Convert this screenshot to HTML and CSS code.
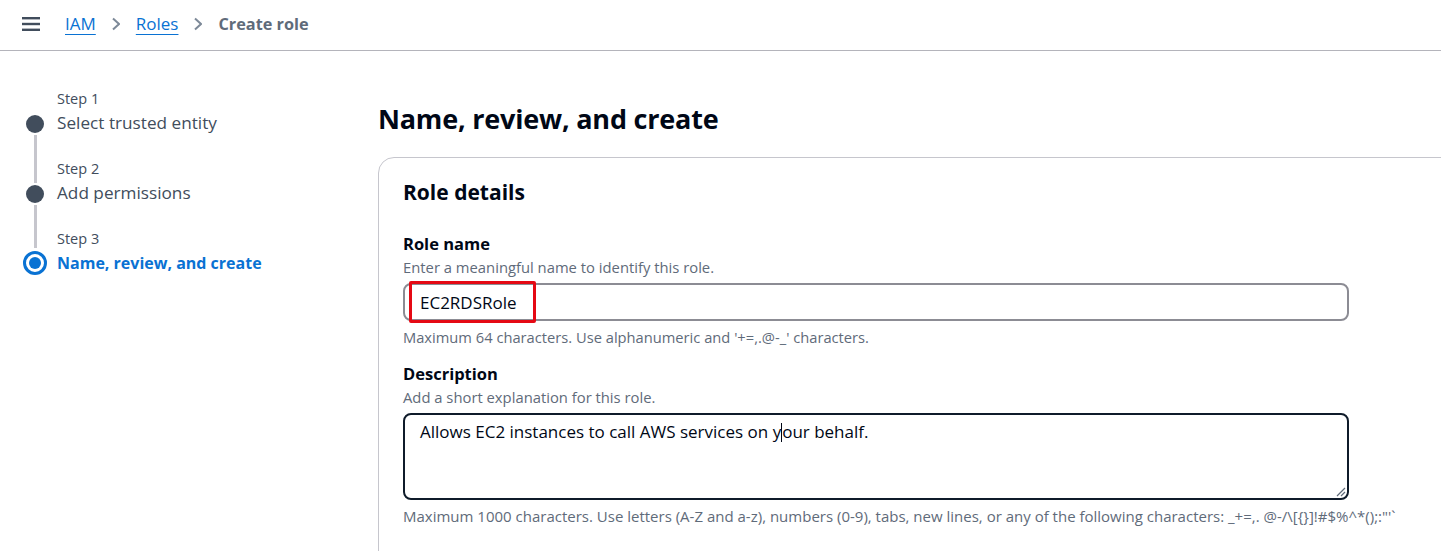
FILE: index.html
```html
<!DOCTYPE html>
<html lang="en">
<head>
<meta charset="utf-8">
<title>Create role</title>
<link rel="stylesheet" href="styles.css">
</head>
<body>
<header class="topbar">
  <svg class="menu" width="18" height="14" viewBox="0 0 18 14"><rect x="0" y="0" width="18" height="2.4" fill="#414d5c"/><rect x="0" y="5.8" width="18" height="2.4" fill="#414d5c"/><rect x="0" y="11.6" width="18" height="2.4" fill="#414d5c"/></svg>
  <nav class="crumbs">
    <a class="crumb-link">IAM</a>
    <svg class="chev" width="8" height="14" viewBox="0 0 8 14"><path d="M1 1.5 L7 7 L1 12.5" fill="none" stroke="#7d8998" stroke-width="2"/></svg>
    <a class="crumb-link">Roles</a>
    <svg class="chev" width="8" height="14" viewBox="0 0 8 14"><path d="M1 1.5 L7 7 L1 12.5" fill="none" stroke="#7d8998" stroke-width="2"/></svg>
    <span class="crumb-current">Create role</span>
  </nav>
</header>
<div class="layout">
  <aside class="steps">
    <div class="step first">
      <div class="rail"><span class="line"></span><span class="dot"></span></div>
      <div class="stext"><div class="slabel">Step 1</div><div class="stitle">Select trusted entity</div></div>
    </div>
    <div class="step">
      <div class="rail"><span class="line"></span><span class="dot"></span></div>
      <div class="stext"><div class="slabel">Step 2</div><div class="stitle">Add permissions</div></div>
    </div>
    <div class="step active">
      <div class="rail"><span class="line"></span><span class="dot"><span class="inner"></span></span></div>
      <div class="stext"><div class="slabel">Step 3</div><div class="stitle">Name, review, and create</div></div>
    </div>
  </aside>
  <main class="main">
    <h1 class="page-title">Name, review, and create</h1>
    <section class="card">
      <h2 class="card-title">Role details</h2>
      <div class="field">
        <div class="label">Role name</div>
        <div class="hint">Enter a meaningful name to identify this role.</div>
        <div class="input-wrap">
          <div class="input">EC2RDSRole</div>
          <span class="highlight"></span>
        </div>
        <div class="constraint">Maximum 64 characters. Use alphanumeric and '+=,.@-_' characters.</div>
      </div>
      <div class="field desc">
        <div class="label">Description</div>
        <div class="hint">Add a short explanation for this role.</div>
        <div class="textarea">Allows EC2 instances to call AWS services on y<span class="caret"></span>our behalf.<svg class="grip" width="10" height="10" viewBox="0 0 10 10"><path d="M1 9 L9 1 M5 9 L9 5" stroke="#5f6b7a" stroke-width="1.2" fill="none"/></svg></div>
        <div class="constraint long">Maximum 1000 characters. Use letters (A-Z and a-z), numbers (0-9), tabs, new lines, or any of the following characters: _+=,. @-/\[{}]!#$%^*();:"'`</div>
      </div>
    </section>
  </main>
</div>
</body>
</html>
```

FILE: styles.css
```css
* { box-sizing: border-box; }
html, body { margin: 0; padding: 0; }
body {
  font-family: "Open Sans", "Noto Sans", sans-serif;
  color: #000716;
  background: #ffffff;
  width: 1441px;
  height: 551px;
  overflow: hidden;
}
.topbar {
  height: 51px;
  border-bottom: 1px solid #b4b4bb;
  display: flex;
  align-items: center;
  padding-left: 22px;
  padding-bottom: 3px;
}
.menu { display: block; margin-right: 25px; }
.crumbs {
  display: flex;
  align-items: center;
  gap: 16px;
  font-size: 17px;
  line-height: 22px;
}
.crumb-link {
  color: #0972d3;
  text-decoration: underline;
  text-underline-offset: 4px;
  text-decoration-thickness: 1px;
}
.chev { display: block; }
.crumb-current { color: #5f6b7a; font-weight: 700; font-size: 16.3px; }

.layout { display: flex; }
.steps {
  width: 378px;
  flex: none;
  padding-left: 22px;
  padding-top: 38px;
}
.step { display: flex; gap: 9px; }
.stext { padding-top: 24px; }
.step.first .stext { padding-top: 0; }
.rail {
  width: 26px;
  display: flex;
  flex-direction: column;
  align-items: center;
}
.line {
  flex: 1;
  width: 3px;
  background: #c6c6cd;
  margin-bottom: 2px;
}
.first .line { background: transparent; }
.dot {
  width: 18px;
  height: 18px;
  border-radius: 50%;
  background: #414d5c;
  margin-bottom: 2px;
}
.active .line { margin-bottom: 3px; }
.active .dot {
  width: 24px;
  height: 24px;
  background: #fff;
  border: 3px solid #0972d3;
  margin-bottom: 0;
  display: flex;
  align-items: center;
  justify-content: center;
}
.inner { width: 12px; height: 12px; border-radius: 50%; background: #0972d3; }
.slabel { font-size: 14.5px; line-height: 20px; color: #414d5c; margin-bottom: 2px; }
.stitle { font-size: 17.2px; line-height: 24px; color: #414d5c; }
.active .stitle { color: #0972d3; font-weight: 700; font-size: 16px; }

.main { flex: none; padding-top: 50px; }
.page-title {
  margin: 0 0 20px;
  font-size: 27px;
  line-height: 36px;
  font-weight: 700;
  letter-spacing: -0.2px;
}
.card {
  width: 1120px;
  border: 1px solid #c6c6cd;
  border-radius: 16px;
  padding: 21px 24px 40px;
}
.card-title { margin: 0 0 28px; font-size: 21px; line-height: 26px; font-weight: 700; }
.label { font-size: 16.5px; line-height: 22px; font-weight: 700; }
.hint { font-size: 14.8px; line-height: 20px; color: #5f6b7a; margin-top: 2px; }
.input-wrap { position: relative; width: 946px; margin-top: 6px; }
.input {
  height: 38px;
  border: 2px solid #8c8c94;
  border-radius: 8px;
  padding: 0 15px;
  display: flex;
  align-items: center;
  font-size: 17px;
  color: #000716;
}
.highlight {
  position: absolute;
  left: 6px;
  top: -2px;
  width: 127px;
  height: 42px;
  border: 3px solid #e50914;
  border-radius: 2px;
}
.constraint { font-size: 14.7px; line-height: 20px; color: #5f6b7a; margin-top: 6px; white-space: nowrap; }
.constraint.long { font-size: 15px; }
.field.desc { margin-top: 16px; }
.textarea {
  position: relative;
  width: 946px;
  height: 87px;
  margin-top: 6px;
  border: 2px solid #0f1b2a;
  border-radius: 8px;
  padding: 5px 15px;
  font-size: 17px;
  line-height: 24px;
}
.caret { display: inline-block; width: 1px; height: 19px; background: #000716; vertical-align: -4px; }
.grip { position: absolute; right: 1px; bottom: 1px; }
```
